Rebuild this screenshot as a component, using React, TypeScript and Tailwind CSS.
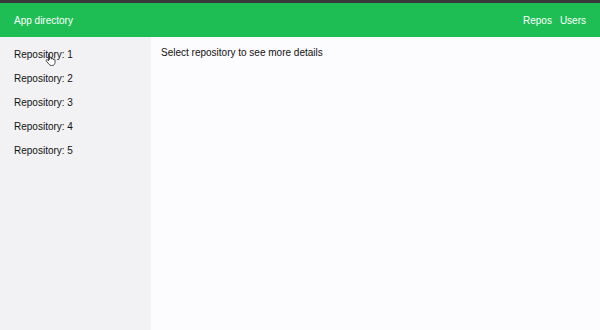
import { useState } from "react";

const repos = [1, 2, 3, 4, 5];

function HandCursor() {
  // small pointer cursor that sits over the first item in the screenshot
  return (
    <svg
      className="absolute left-[45px] top-[16px] pointer-events-none"
      width="12"
      height="13"
      viewBox="0 0 12 13"
    >
      <path
        d="M3.5 1.2c.6 0 1 .4 1 1v4.3l.2-.1V5.1c0-.5.4-.9.9-.9s.9.4.9.9v1.1c0-.5.4-.9.9-.9s.9.4.9.9v.6c0-.5.4-.8.9-.8s.8.4.8.9v2.6c0 1.6-1.2 3-2.8 3H6.3c-.9 0-1.7-.4-2.2-1.1L1.3 8c-.3-.4-.2-1 .2-1.3.4-.3 1-.2 1.3.2l.7.9V2.2c0-.6.4-1 1-1z"
        fill="#fff"
        stroke="#222"
        strokeWidth="0.8"
      />
    </svg>
  );
}

export default function App() {
  const [selected, setSelected] = useState<number | null>(null);

  return (
    <div className="w-[600px] h-[330px] flex flex-col bg-[#fcfbfd] font-['Liberation_Sans',Arial,sans-serif] text-[10px] text-[#111]">
      <div className="h-[3px] bg-[#3a3a3a]" />
      <header className="h-[34px] bg-[#1ebe55] flex items-center justify-between px-[14px] text-white">
        <span>App directory</span>
        <nav className="flex gap-[8px]">
          <a href="#">Repos</a>
          <a href="#">Users</a>
        </nav>
      </header>
      <div className="flex flex-1 min-h-0">
        <aside className="relative w-[151px] bg-[#f2f1f3] pt-[5px] px-[14px]">
          {repos.map((n) => (
            <div
              key={n}
              onClick={() => setSelected(n)}
              className="h-[24.2px] flex items-center cursor-pointer"
            >
              Repository: {n}
            </div>
          ))}
          <HandCursor />
        </aside>
        <main className="flex-1 pt-[10px] px-[10px] leading-[12px]">
          {selected ? `Repository ${selected}` : "Select repository to see more details"}
        </main>
      </div>
    </div>
  );
}
